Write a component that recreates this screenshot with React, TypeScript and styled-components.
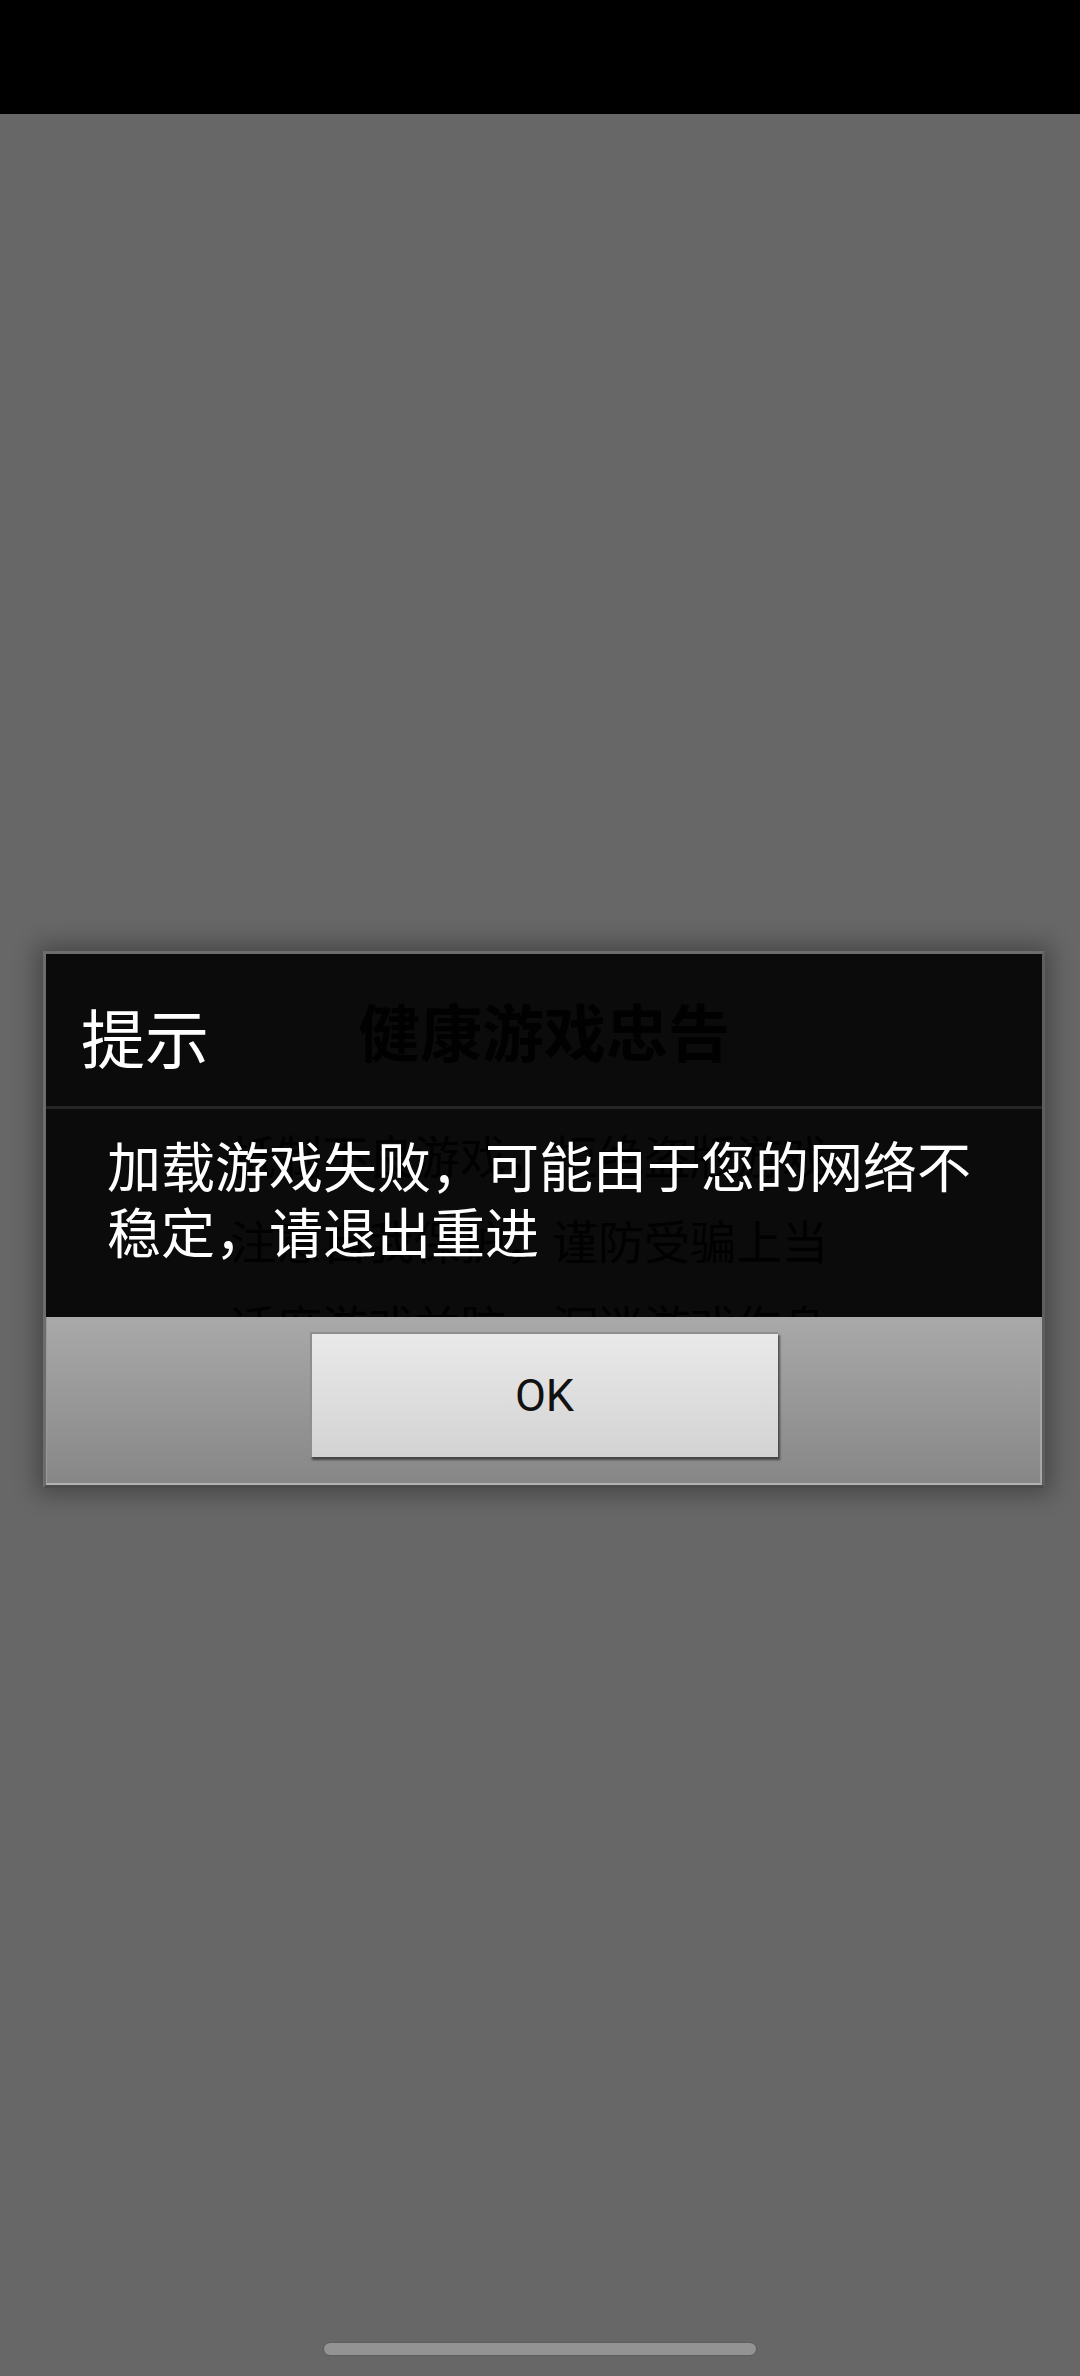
import React from 'react';
import styled, { createGlobalStyle } from 'styled-components';

const GlobalStyle = createGlobalStyle`
  html, body {
    margin: 0;
    padding: 0;
    background: #676767;
  }
  body {
    font-family: "Noto Sans CJK SC", "Noto Sans", sans-serif;
  }
  * {
    box-sizing: border-box;
  }
`;

const ghostLines = [
  '抵制不良游戏，拒绝盗版游戏',
  '注意自我保护，谨防受骗上当',
  '适度游戏益脑，沉迷游戏伤身',
  '合理安排时间，享受健康生活',
];

const App: React.FC = () => {
  return (
    <Screen>
      <GlobalStyle />
      <StatusBar />
      <Main>
        <Dialog>
          <DarkArea>
            <Ghost aria-hidden="true">
              <GhostTitle>健康游戏忠告</GhostTitle>
              {ghostLines.map((line) => (
                <GhostLine key={line}>{line}</GhostLine>
              ))}
            </Ghost>
            <Header>
              <Title>提示</Title>
            </Header>
            <Divider />
            <Message>加载游戏失败，可能由于您的网络不稳定，请退出重进</Message>
          </DarkArea>
          <ButtonBar>
            <OkButton>OK</OkButton>
          </ButtonBar>
        </Dialog>
      </Main>
      <HomeIndicator />
    </Screen>
  );
};

export default App;

const Screen = styled.div`
  width: 1080px;
  min-height: 2376px;
  display: flex;
  flex-direction: column;
  background: #676767;
`;

const StatusBar = styled.div`
  height: 114px;
  background: #000;
`;

const Main = styled.div`
  padding-top: 837px;
  padding-left: 43px;
`;

const Dialog = styled.div`
  width: 1002px;
  border: 3px solid #6d6d6d;
  border-bottom-color: #4c4c4c;
  border-right-color: #5e5e5e;
  box-shadow: 0 0 22px 6px rgba(0, 0, 0, 0.32);
  display: flex;
  flex-direction: column;
`;

const DarkArea = styled.div`
  position: relative;
  overflow: hidden;
  height: 363px;
  background: #0b0b0b;
  display: flex;
  flex-direction: column;
`;

const Ghost = styled.div`
  position: absolute;
  inset: 0;
  padding-top: 26px;
  display: flex;
  flex-direction: column;
  align-items: center;
  color: #010101;
  pointer-events: none;
`;

const GhostTitle = styled.div`
  font-size: 62px;
  font-weight: 700;
  line-height: 100px;
  margin-bottom: 32px;
`;

const GhostLine = styled.div`
  font-size: 46px;
  line-height: 85px;
  padding-right: 30px;
  white-space: nowrap;
`;

const Header = styled.div`
  position: relative;
  height: 152px;
  padding: 10px 0 0 35px;
`;

const Title = styled.div`
  color: #fff;
  font-size: 64px;
  line-height: 142px;
`;

const Divider = styled.div`
  position: relative;
  height: 3px;
  background: #252525;
`;

const Message = styled.div`
  position: relative;
  flex: 1;
  padding: 23px 61px 0 61px;
  color: #fff;
  font-size: 54px;
  line-height: 66px;
`;

const ButtonBar = styled.div`
  height: 168px;
  padding-top: 15px;
  display: flex;
  justify-content: center;
  align-items: flex-start;
  background: linear-gradient(#a9a9a9, #878787);
  border-left: 1px solid #9a9a9a;
  border-right: 2px solid #a6a6a6;
  border-bottom: 2px solid #b3b3b3;
`;

const OkButton = styled.div`
  width: 468px;
  height: 125px;
  display: flex;
  align-items: center;
  justify-content: center;
  background: linear-gradient(#e9e9e9, #d3d3d3);
  border-top: 2px solid #8e8e8e;
  border-left: 2px solid #8e8e8e;
  box-shadow: 2px 3px 2px rgba(0, 0, 0, 0.5);
  color: #111;
  font-family: Roboto, "Noto Sans", sans-serif;
  font-size: 45px;
`;

const HomeIndicator = styled.div`
  margin: auto auto 21px;
  width: 432px;
  height: 12px;
  border-radius: 6px;
  background: #939393;
  box-shadow: 0 0 1px 1px rgba(0, 0, 0, 0.08);
`;
